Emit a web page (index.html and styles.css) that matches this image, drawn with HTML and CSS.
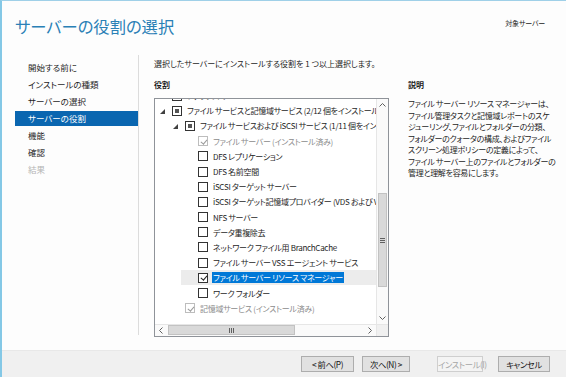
FILE: index.html
```html
<!DOCTYPE html>
<html lang="ja">
<head>
<meta charset="utf-8">
<title>サーバーの役割の選択</title>
<link rel="stylesheet" href="styles.css">
</head>
<body>
<div class="window">
  <header class="header">
    <h1 class="title">サーバーの役割の選択</h1>
    <div class="target">対象サーバー</div>
  </header>
  <div class="body">
    <nav class="nav">
      <div class="nav-item">開始する前に</div>
      <div class="nav-item">インストールの種類</div>
      <div class="nav-item">サーバーの選択</div>
      <div class="nav-item active">サーバーの役割</div>
      <div class="nav-item">機能</div>
      <div class="nav-item">確認</div>
      <div class="nav-item disabled">結果</div>
    </nav>
    <main class="main">
      <p class="intro">選択したサーバーにインストールする役割を 1 つ以上選択します。</p>
      <div class="columns">
        <section class="roles">
          <h2 class="heading">役割</h2>
          <div class="listbox">
            <div class="list-area">
              <div class="viewport">
                <ul class="tree">
                  <li class="row l0"><span class="twisty"></span><span class="cb"></span><span class="label">ファックス サーバー</span></li>
                  <li class="row l0"><span class="twisty open"></span><span class="cb mixed"></span><span class="label">ファイル サービスと記憶域サービス (2/12 個をインストール済み)</span></li>
                  <li class="row l1"><span class="twisty open"></span><span class="cb mixed"></span><span class="label">ファイル サービスおよび iSCSI サービス (1/11 個をインストール済み)</span></li>
                  <li class="row l2 dim"><span class="cb checked"></span><span class="label">ファイル サーバー (インストール済み)</span></li>
                  <li class="row l2"><span class="cb"></span><span class="label">DFS レプリケーション</span></li>
                  <li class="row l2"><span class="cb"></span><span class="label">DFS 名前空間</span></li>
                  <li class="row l2"><span class="cb"></span><span class="label">iSCSI ターゲット サーバー</span></li>
                  <li class="row l2"><span class="cb"></span><span class="label">iSCSI ターゲット記憶域プロバイダー (VDS および VSS ハードウェア プロバイダー)</span></li>
                  <li class="row l2"><span class="cb"></span><span class="label">NFS サーバー</span></li>
                  <li class="row l2"><span class="cb"></span><span class="label">データ重複除去</span></li>
                  <li class="row l2"><span class="cb"></span><span class="label">ネットワーク ファイル用 BranchCache</span></li>
                  <li class="row l2"><span class="cb"></span><span class="label">ファイル サーバー VSS エージェント サービス</span></li>
                  <li class="row l2 selected"><span class="cb checked"></span><span class="label">ファイル サーバー リソース マネージャー</span></li>
                  <li class="row l2"><span class="cb"></span><span class="label">ワーク フォルダー</span></li>
                  <li class="row l1 dim"><span class="twisty"></span><span class="cb checked"></span><span class="label">記憶域サービス (インストール済み)</span></li>
                </ul>
              </div>
              <div class="vscroll">
                <div class="sb-btn up"><svg width="7" height="4" viewBox="0 0 7 4"><polyline points="0.5,3.5 3.5,0.5 6.5,3.5" fill="none" stroke="#606060" stroke-width="1"/></svg></div>
                <div class="v-track">
                  <div class="v-thumb"><svg width="5" height="5" viewBox="0 0 5 5"><path d="M0 0.5H5M0 2.5H5M0 4.5H5" stroke="#606060" stroke-width="1"/></svg></div>
                </div>
                <div class="sb-btn down"><svg width="7" height="4" viewBox="0 0 7 4"><polyline points="0.5,0.5 3.5,3.5 6.5,0.5" fill="none" stroke="#606060" stroke-width="1"/></svg></div>
              </div>
            </div>
            <div class="hscroll">
              <div class="sb-btn left"><svg width="4" height="7" viewBox="0 0 4 7"><polyline points="3.5,0.5 0.5,3.5 3.5,6.5" fill="none" stroke="#606060" stroke-width="1"/></svg></div>
              <div class="h-track">
                <div class="h-thumb"><svg width="5" height="5" viewBox="0 0 5 5"><path d="M0.5 0V5M2.5 0V5M4.5 0V5" stroke="#606060" stroke-width="1"/></svg></div>
              </div>
              <div class="sb-btn right"><svg width="4" height="7" viewBox="0 0 4 7"><polyline points="0.5,0.5 3.5,3.5 0.5,6.5" fill="none" stroke="#606060" stroke-width="1"/></svg></div>
              <div class="corner"></div>
            </div>
          </div>
        </section>
        <section class="desc">
          <h2 class="heading">説明</h2>
          <p class="desc-text">ファイル サーバー リソース マネージャーは、<br>ファイル管理タスクと記憶域レポートのスケ<br>ジューリング、ファイルとフォルダーの分類、<br>フォルダーのクォータの構成、およびファイル<br>スクリーン処理ポリシーの定義によって、<br>ファイル サーバー上のファイルとフォルダーの<br>管理と理解を容易にします。</p>
        </section>
      </div>
    </main>
  </div>
  <footer class="footer">
    <button class="btn b-prev">&lt; 前へ(P)</button>
    <button class="btn b-next">次へ(N) &gt;</button>
    <button class="btn b-install" disabled>インストール(I)</button>
    <button class="btn b-cancel">キャンセル</button>
  </footer>
</div>
</body>
</html>
```

FILE: styles.css
```css
* { box-sizing: border-box; }
html, body { margin: 0; padding: 0; }
body {
  width: 566px;
  height: 377px;
  overflow: hidden;
  background: #fcfcfc;
  font-family: "Noto Sans CJK JP", "Noto Sans", sans-serif;
  font-feature-settings: "palt";
  color: #1e1e1e;
}
.window {
  width: 566px;
  height: 377px;
  border-left: 2px solid #84c8e6;
  border-top: 1px solid #9fd0e8;
  display: flex;
  flex-direction: column;
  background: #fdfdfd;
}
.header {
  height: 54px;
  display: flex;
  justify-content: space-between;
  align-items: flex-start;
  padding: 0 21px 0 13px;
}
.title {
  margin: 0;
  padding-top: 15px;
  font-size: 16.3px;
  line-height: 20px;
  font-weight: normal;
  color: #2a80b6;
}
.target {
  padding-top: 17px;
  font-size: 7px;
  line-height: 10px;
  letter-spacing: -0.2px;
  color: #222;
}
.body {
  flex: 1;
  display: flex;
  align-items: flex-start;
}
.nav {
  width: 137px;
  height: 280px;
  border-right: 1px solid #dcdcdc;
  padding: 5px 0 0 13px;
  display: flex;
  flex-direction: column;
  gap: 2px;
}
.nav-item {
  height: 15px;
  line-height: 15px;
  padding-left: 13px;
  font-size: 8.5px;
  color: #1e1e1e;
}
.nav-item.active {
  background: #0a66b0;
  color: #fff;
}
.nav-item.disabled { color: #b4b4b4; }
.main {
  flex: 1;
  padding: 2px 0 0 15px;
}
.intro {
  margin: 0;
  font-size: 8px;
  line-height: 14px;
}
.columns {
  display: flex;
  gap: 19px;
  margin-top: 7px;
}
.roles { width: 235px; }
.heading {
  margin: 0 0 6px;
  font-size: 8px;
  line-height: 14px;
  font-weight: bold;
  color: #1e1e1e;
}
.listbox {
  width: 235px;
  height: 239px;
  border: 1px solid #8f9399;
  background: #fff;
  display: flex;
  flex-direction: column;
}
.list-area {
  height: 225px;
  display: flex;
}
.viewport {
  flex: 1;
  overflow: hidden;
  position: relative;
}
.tree {
  list-style: none;
  margin: -11px 0 0;
  padding: 0;
  white-space: nowrap;
}
.row {
  height: 15.2px;
  display: flex;
  align-items: center;
  font-size: 8px;
  letter-spacing: -0.3px;
  color: #1e1e1e;
}
.row.l0 { padding-left: 0; }
.row.l1 { margin-left: 13px; }
.row.l2 { margin-left: 26px; padding-left: 17px; }
.row.dim .label { color: #8c8c8c; }
.twisty {
  width: 17px;
  height: 10px;
  flex: none;
  position: relative;
}
.twisty.open::after {
  content: "";
  position: absolute;
  left: 5px;
  top: 3px;
  width: 0;
  height: 0;
  border-left: 5px solid transparent;
  border-bottom: 5px solid #404040;
}
.cb {
  width: 10px;
  height: 10px;
  flex: none;
  border: 1px solid #333;
  background: #fff;
  position: relative;
  margin-right: 5px;
}
.cb.mixed::after {
  content: "";
  position: absolute;
  left: 2px;
  top: 2px;
  width: 4px;
  height: 4px;
  background: #555;
}
.cb.checked::after {
  content: "";
  position: absolute;
  left: 2.5px;
  top: 0.5px;
  width: 2.5px;
  height: 5px;
  border-right: 1.2px solid #222;
  border-bottom: 1.2px solid #222;
  transform: rotate(40deg);
}
.row.dim .cb { border-color: #bdbdbd; }
.row.dim .cb.checked::after { border-color: #9a9a9a; }
.label { line-height: 11px; }
.row.selected { background: #ececec; }
.row.selected .label {
  background: #0078d7;
  color: #fff;
  padding: 0 1px;
  margin-left: -1px;
}
.vscroll {
  width: 12px;
  flex: none;
  display: flex;
  flex-direction: column;
  background: #fafafa;
  border-left: 1px solid #e6e6e6;
}
.sb-btn {
  display: flex;
  align-items: center;
  justify-content: center;
  flex: none;
}
.vscroll .sb-btn { height: 12px; }
.v-track {
  flex: 1;
  padding-top: 82px;
}
.v-thumb {
  height: 94px;
  margin: 0 1px;
  background: #d9d9d9;
  border: 1px solid #c2c2c2;
  display: flex;
  align-items: center;
  justify-content: center;
}
.hscroll {
  height: 12px;
  display: flex;
  background: #fafafa;
  border-top: 1px solid #e6e6e6;
}
.hscroll .sb-btn { width: 12px; }
.h-track {
  flex: 1;
  padding-left: 1px;
}
.h-thumb {
  width: 127px;
  height: 10px;
  background: #d9d9d9;
  border: 1px solid #c2c2c2;
  display: flex;
  align-items: center;
  justify-content: center;
}
.corner {
  width: 12px;
  background: #f0f0f0;
  border-left: 1px solid #e6e6e6;
}
.desc { flex: 1; }
.desc-text {
  margin: 0;
  font-size: 8px;
  line-height: 11.5px;
  letter-spacing: -0.3px;
  white-space: nowrap;
  color: #1e1e1e;
}
.footer {
  height: 27px;
  border-top: 1px solid #e8e8e8;
  background: #f0f0f0;
  display: flex;
  align-items: center;
  justify-content: flex-end;
  padding: 0 16px 0 0;
}
.btn {
  height: 16px;
  padding: 0;
  font-family: inherit;
  font-feature-settings: "palt";
  font-size: 8.3px;
  letter-spacing: -0.4px;
  line-height: 14px;
  white-space: nowrap;
  overflow: visible;
  color: #111;
  background: #e1e1e1;
  border: 1px solid #adadad;
}
.b-prev { width: 53px; }
.b-next { width: 48px; margin-left: 8px; }
.b-install {
  width: 46px;
  margin-left: 27px;
  color: #a6a6a6;
  background: #f4f4f4;
  border-color: #cfcfcf;
}
.b-cancel { width: 52px; margin-left: 15px; }
```
